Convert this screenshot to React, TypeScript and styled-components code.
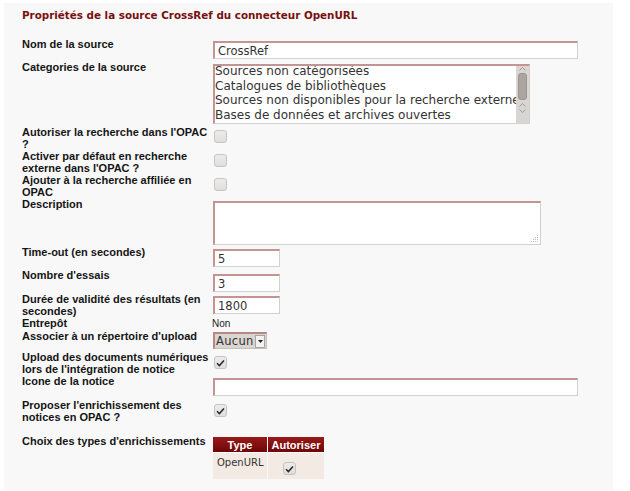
import React from 'react';
import styled, { createGlobalStyle } from 'styled-components';

const GlobalStyle = createGlobalStyle`
  body {
    margin: 0;
    background: #ffffff;
    font-family: "Liberation Sans", Arial, sans-serif;
  }
`;

const Panel = styled.div`
  box-sizing: border-box;
  width: 609px;
  height: 487px;
  margin: 3px 0 0 4px;
  padding: 6px 0 0 18px;
  background: #f8f8f8;
`;

const Title = styled.h3`
  margin: 0 0 17px 0;
  font-family: "DejaVu Sans", Verdana, sans-serif;
  font-size: 10.35px;
  line-height: 12px;
  font-weight: bold;
  color: #7a0f0f;
`;

const Row = styled.div<{ $h: number }>`
  display: flex;
  align-items: flex-start;
  height: ${(p) => p.$h}px;
`;

const Label = styled.div`
  width: 191px;
  flex: none;
  font-size: 11px;
  line-height: 12px;
  font-weight: bold;
  color: #151515;
`;

const Field = styled.div<{ $top?: number }>`
  padding-top: ${(p) => p.$top ?? 3}px;
`;

const TextInput = styled.div<{ $w: number }>`
  box-sizing: border-box;
  width: ${(p) => p.$w}px;
  height: 18px;
  padding: 1px 0 0 3px;
  background: #ffffff;
  border: 1px solid #d4d0d0;
  border-top: 2px solid #c49494;
  border-left: 2px solid #c49494;
  font-family: "DejaVu Sans", sans-serif;
  font-size: 11.5px;
  line-height: 14px;
  color: #333333;
`;

const TextArea = styled.div`
  position: relative;
  box-sizing: border-box;
  width: 328px;
  height: 44px;
  background: #ffffff;
  border: 1px solid #d4d0d0;
  border-top: 2px solid #c49494;
  border-left: 2px solid #c49494;
`;

const Grip = styled.svg`
  position: absolute;
  right: 1px;
  bottom: 1px;
`;

const ListBox = styled.div`
  box-sizing: border-box;
  display: flex;
  width: 317px;
  height: 60px;
  background: #ffffff;
  border: 1px solid #d4d0d0;
  border-top: 2px solid #c49494;
  border-left: 2px solid #c49494;
`;

const Options = styled.div`
  flex: 1;
  overflow: hidden;
  font-family: "DejaVu Sans", sans-serif;
  font-size: 12px;
  line-height: 14.6px;
  color: #333333;
  white-space: nowrap;
`;

const OptionList = styled.div`
  margin-top: -2px;
`;

const Scrollbar = styled.div`
  width: 13px;
  flex: none;
  display: flex;
  flex-direction: column;
  align-items: center;
  background: #d8d5d2;
`;

const Thumb = styled.div`
  width: 9px;
  height: 27px;
  margin: 1px 0 2px;
  border-radius: 3px;
  background: #aaa5a1;
  border: 1px solid #99948f;
  box-sizing: border-box;
`;

const Chevron = styled.svg`
  display: block;
`;

const Box = styled.div`
  box-sizing: border-box;
  width: 13px;
  height: 13px;
  margin-left: 1px;
  border-radius: 3px;
  border: 1px solid #c6c4c2;
  background: linear-gradient(#ecebea, #e0dedc);
  display: flex;
  align-items: center;
  justify-content: center;
`;

const Plain = styled.div`
  font-size: 10px;
  line-height: 12px;
  color: #222222;
  margin-left: -1px;
`;

const SelectBox = styled.div`
  box-sizing: border-box;
  display: flex;
  align-items: center;
  width: 54px;
  height: 17px;
  background: #d9d5d1;
  border: 1px solid #c4c0bc;
  border-top: 2px solid #b88888;
  border-left: 2px solid #b88888;
  font-family: "DejaVu Sans", sans-serif;
  font-size: 11.5px;
  color: #333333;
  letter-spacing: 0.3px;
`;

const SelectText = styled.span`
  flex: 1;
  padding-left: 1px;
  line-height: 13px;
`;

const SelectArrow = styled.div`
  width: 8px;
  height: 11px;
  margin-right: 1px;
  background: #f4f2f0;
  border: 1px solid #a8a4a0;
  display: flex;
  align-items: center;
  justify-content: center;
`;

const Table = styled.table`
  border-collapse: separate;
  border-spacing: 1px 0;
  margin-left: -1px;
`;

const Th = styled.th<{ $w: number }>`
  width: ${(p) => p.$w}px;
  height: 15px;
  padding: 0;
  background: linear-gradient(#9a1a1a, #6e0606);
  color: #ffffff;
  font-size: 11px;
  font-weight: bold;
  text-align: center;
  border-bottom: 1px solid #ffffff;
`;

const Td = styled.td`
  height: 26px;
  padding: 4px 0 0 4px;
  background: #f3ebe3;
  font-family: "DejaVu Sans", sans-serif;
  font-size: 10px;
  color: #333333;
  vertical-align: top;
  box-sizing: border-box;
`;

const CellBox = styled.div`
  padding: 5px 0 0 10px;
`;

const Check = () => (
  <svg width="9" height="8" viewBox="0 0 9 8">
    <path d="M1 4.2 L3.4 6.6 L8 1.4" fill="none" stroke="#2a2a2a" strokeWidth="1.5" />
  </svg>
);

const Checkbox = ({ checked }: { checked?: boolean }) => <Box>{checked && <Check />}</Box>;

const Up = () => (
  <Chevron width="9" height="6" viewBox="0 0 9 6">
    <path d="M1.5 4.5 L4.5 1.5 L7.5 4.5" fill="none" stroke="#9c9894" strokeWidth="1" />
  </Chevron>
);

const Down = () => (
  <Chevron width="9" height="6" viewBox="0 0 9 6">
    <path d="M1.5 1.5 L4.5 4.5 L7.5 1.5" fill="none" stroke="#9c9894" strokeWidth="1" />
  </Chevron>
);

const categories = [
  'Sources non catégorisées',
  'Catalogues de bibliothèques',
  'Sources non disponibles pour la recherche externe',
  'Bases de données et archives ouvertes',
];

const App = () => {
  return (
    <>
      <GlobalStyle />
      <Panel>
        <Title>Propriétés de la source CrossRef du connecteur OpenURL</Title>

        <Row $h={23}>
          <Label>Nom de la source</Label>
          <Field>
            <TextInput $w={365}>CrossRef</TextInput>
          </Field>
        </Row>

        <Row $h={65}>
          <Label>Categories de la source</Label>
          <Field>
            <ListBox>
              <Options>
                <OptionList>
                  {categories.map((c) => (
                    <div key={c}>{c}</div>
                  ))}
                </OptionList>
              </Options>
              <Scrollbar>
                <Up />
                <Thumb />
                <Up />
                <Down />
              </Scrollbar>
            </ListBox>
          </Field>
        </Row>

        <Row $h={24}>
          <Label>Autoriser la recherche dans l'OPAC ?</Label>
          <Field $top={4}>
            <Checkbox />
          </Field>
        </Row>

        <Row $h={24}>
          <Label>Activer par défaut en recherche externe dans l'OPAC ?</Label>
          <Field $top={4}>
            <Checkbox />
          </Field>
        </Row>

        <Row $h={24}>
          <Label>Ajouter à la recherche affiliée en OPAC</Label>
          <Field $top={4}>
            <Checkbox />
          </Field>
        </Row>

        <Row $h={48}>
          <Label>Description</Label>
          <Field>
            <TextArea>
              <Grip width="9" height="9" viewBox="0 0 9 9">
                <g fill="#bdbdbd">
                  <rect x="7" y="1" width="1" height="1" />
                  <rect x="5" y="3" width="1" height="1" />
                  <rect x="7" y="3" width="1" height="1" />
                  <rect x="3" y="5" width="1" height="1" />
                  <rect x="5" y="5" width="1" height="1" />
                  <rect x="7" y="5" width="1" height="1" />
                  <rect x="1" y="7" width="1" height="1" />
                  <rect x="3" y="7" width="1" height="1" />
                  <rect x="5" y="7" width="1" height="1" />
                  <rect x="7" y="7" width="1" height="1" />
                </g>
              </Grip>
            </TextArea>
          </Field>
        </Row>

        <Row $h={23}>
          <Label>Time-out (en secondes)</Label>
          <Field>
            <TextInput $w={67}>5</TextInput>
          </Field>
        </Row>

        <Row $h={24}>
          <Label>Nombre d'essais</Label>
          <Field $top={5}>
            <TextInput $w={67}>3</TextInput>
          </Field>
        </Row>

        <Row $h={24}>
          <Label>Durée de validité des résultats (en secondes)</Label>
          <Field>
            <TextInput $w={67}>1800</TextInput>
          </Field>
        </Row>

        <Row $h={13}>
          <Label>Entrepôt</Label>
          <Field $top={1}>
            <Plain>Non</Plain>
          </Field>
        </Row>

        <Row $h={21}>
          <Label>Associer à un répertoire d'upload</Label>
          <Field $top={2}>
            <SelectBox>
              <SelectText>Aucun</SelectText>
              <SelectArrow>
                <svg width="5" height="3" viewBox="0 0 5 3">
                  <path d="M0 0 H5 L2.5 3 Z" fill="#222" />
                </svg>
              </SelectArrow>
            </SelectBox>
          </Field>
        </Row>

        <Row $h={24}>
          <Label>Upload des documents numériques lors de l'intégration de notice</Label>
          <Field $top={5}>
            <Checkbox checked />
          </Field>
        </Row>

        <Row $h={24}>
          <Label>Icone de la notice</Label>
          <Field>
            <TextInput $w={365} />
          </Field>
        </Row>

        <Row $h={36}>
          <Label>Proposer l'enrichissement des notices en OPAC ?</Label>
          <Field $top={5}>
            <Checkbox checked />
          </Field>
        </Row>

        <Row $h={50}>
          <Label>Choix des types d'enrichissements</Label>
          <Field $top={2}>
            <Table>
              <thead>
                <tr>
                  <Th $w={54}>Type</Th>
                  <Th $w={56}>Autoriser</Th>
                </tr>
              </thead>
              <tbody>
                <tr>
                  <Td>OpenURL</Td>
                  <Td>
                    <CellBox>
                      <Checkbox checked />
                    </CellBox>
                  </Td>
                </tr>
              </tbody>
            </Table>
          </Field>
        </Row>
      </Panel>
    </>
  );
};

export default App;
